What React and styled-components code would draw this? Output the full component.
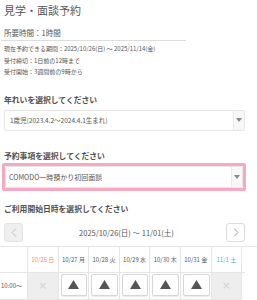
import React from "react";
import styled, { createGlobalStyle } from "styled-components";

const Global = createGlobalStyle`
  html, body { margin: 0; padding: 0; background: #fff; }
  body { font-family: "Noto Sans CJK JP", "Noto Sans", sans-serif; color: #555; overflow: hidden; }
  * { box-sizing: border-box; }
`;

const Page = styled.div`
  width: 257px;
  padding: 0 12px 0 4px;
`;

const Title = styled.h1`
  margin: 3px 0 0;
  font-size: 11px;
  line-height: 14px;
  font-weight: 400;
  color: #555;
`;

const Duration = styled.div`
  margin-top: 11px;
  font-size: 7.5px;
  line-height: 10px;
  color: #555;
`;

const Rule = styled.div`
  margin: 2px 0 0 -3px;
  width: 185px;
  border-top: 1px solid #ddd;
`;

const InfoList = styled.div`
  margin-top: 2px;
`;

const InfoLine = styled.div`
  font-size: 6px;
  line-height: 11.5px;
  color: #555;
  white-space: nowrap;
`;

const Heading = styled.div`
  margin-top: ${(p) => p.$mt}px;
  font-size: 7.8px;
  line-height: 12px;
  font-weight: 700;
  color: #505050;
  white-space: nowrap;
`;

const Ring = styled.div`
  margin: 1px -1px 0 -2px;
  border: 3px solid #f6a9c0;
  border-radius: 2px;
`;

const SelectBox = styled.div`
  margin-top: ${(p) => p.$mt}px;
  height: ${(p) => p.$h}px;
  display: flex;
  align-items: stretch;
  border: 1px solid #e6e6e6;
  border-radius: 2px;
  background: #fff;
`;

const SelectText = styled.div`
  flex: 1;
  display: flex;
  align-items: center;
  padding-left: ${(p) => p.$pl}px;
  font-size: ${(p) => p.$fs}px;
  color: #555;
  white-space: nowrap;
  overflow: hidden;
`;

const Arrow = styled.div`
  width: 11px;
  display: flex;
  align-items: center;
  justify-content: center;
  border-left: 1px solid #ececec;
  background: #f8f8f8;
`;

const Nav = styled.div`
  margin-top: 8px;
  height: 19px;
  display: flex;
  align-items: center;
  justify-content: space-between;
`;

const NavButton = styled.div`
  width: 19px;
  height: 19px;
  display: flex;
  align-items: center;
  justify-content: center;
  border: 1px solid ${(p) => (p.$disabled ? "#e4e4e4" : "#dcdcdc")};
  border-radius: 3px;
  background: ${(p) => (p.$disabled ? "#efefef" : "#fff")};
`;

const NavLabel = styled.div`
  font-size: 7.5px;
  color: #555;
  white-space: nowrap;
  padding-left: 4px;
`;

const TableWrap = styled.div`
  width: 257px;
`;

const Table = styled.div`
  margin-top: 4px;
  display: grid;
  grid-template-columns: 27px repeat(7, 30.6px) 4px;
  border-top: 1px solid #e6e6e6;
`;

const HeadCell = styled.div`
  height: 26px;
  display: flex;
  align-items: center;
  justify-content: center;
  border-left: ${(p) => (p.$first ? "none" : "1px solid #e6e6e6")};
  border-bottom: 1px solid #e6e6e6;
  font-size: 6px;
  white-space: nowrap;
  color: ${(p) => p.$color || "#555"};
`;

const TimeCell = styled.div`
  height: 27px;
  display: flex;
  align-items: center;
  padding-left: 1px;
  font-size: 6px;
  color: #555;
  white-space: nowrap;
  border-bottom: 1px solid #e6e6e6;
`;

const SlotCell = styled.div`
  height: 27px;
  padding: ${(p) => (p.$closed ? "0" : "1px 1px 3px 2px")};
  border-left: 1px solid #e6e6e6;
  border-bottom: 1px solid #e6e6e6;
  background: ${(p) => (p.$closed ? "#eeeeee" : "#fff")};
  display: flex;
  align-items: stretch;
  justify-content: center;
`;

const SlotButton = styled.div`
  flex: 1;
  display: flex;
  align-items: center;
  justify-content: center;
  border: 1px solid #d6d6d6;
  border-radius: 2px;
  background: #fff;
  box-shadow: 0 1px 1px rgba(0, 0, 0, 0.08);
`;

const Cross = styled.div`
  display: flex;
  align-items: center;
  justify-content: center;
  flex: 1;
  font-size: 11px;
  color: #d2d2d2;
  font-family: "DejaVu Sans", sans-serif;
`;

const Gutter = styled.div`
  border-left: 1px solid #e6e6e6;
  border-bottom: ${(p) => (p.$head ? "1px solid #e6e6e6" : "none")};
`;

const Caret = () => (
  <svg width="6" height="4" viewBox="0 0 6 4">
    <path d="M0 0 H6 L3 4 Z" fill="#8a8a8a" />
  </svg>
);

const Triangle = () => (
  <svg width="11" height="9" viewBox="0 0 11 9">
    <path d="M5.5 0 L11 9 H0 Z" fill="#555" />
  </svg>
);

const Chevron = ({ dir, color }) => (
  <svg width="6" height="9" viewBox="0 0 6 9">
    <path
      d={dir === "left" ? "M5 0.5 L1 4.5 L5 8.5" : "M1 0.5 L5 4.5 L1 8.5"}
      fill="none"
      stroke={color}
      strokeWidth="1"
    />
  </svg>
);

const days = [
  { label: "10/26 日", color: "#f08a6a", closed: true },
  { label: "10/27 月" },
  { label: "10/28 火" },
  { label: "10/29 水" },
  { label: "10/30 木" },
  { label: "10/31 金" },
  { label: "11/1 土", color: "#3fb0e2", closed: true },
];

export default function App() {
  return (
    <>
      <Global />
      <Page>
        <Title>見学・面談予約</Title>
        <Duration>所要時間：1時間</Duration>
        <Rule />
        <InfoList>
          <InfoLine>現在予約できる期間：2025/10/26(日) ～ 2025/11/14(金)</InfoLine>
          <InfoLine>受付締切：1日前の12時まで</InfoLine>
          <InfoLine>受付開始：3週間前の9時から</InfoLine>
        </InfoList>

        <Heading $mt={16}>年れいを選択してください</Heading>
        <SelectBox $mt={4} $h={21}>
          <SelectText $pl={5} $fs={6.5}>1歳児(2023.4.2～2024.4.1生まれ)</SelectText>
          <Arrow>
            <Caret />
          </Arrow>
        </SelectBox>

        <Heading $mt={19}>予約事項を選択してください</Heading>
        <Ring>
          <SelectBox $mt={0} $h={22}>
            <SelectText $pl={3} $fs={7}>COMODO一時預かり初回面談</SelectText>
            <Arrow>
              <Caret />
            </Arrow>
          </SelectBox>
        </Ring>

        <Heading $mt={12}>ご利用開始日時を選択してください</Heading>
        <Nav>
          <NavButton $disabled>
            <Chevron dir="left" color="#bdbdbd" />
          </NavButton>
          <NavLabel>2025/10/26(日) ～ 11/01(土)</NavLabel>
          <NavButton>
            <Chevron dir="right" color="#9a9a9a" />
          </NavButton>
        </Nav>
      </Page>
      <TableWrap>
        <Table>
          <HeadCell $first />
          {days.map((d) => (
            <HeadCell key={d.label} $color={d.color}>
              {d.label}
            </HeadCell>
          ))}
          <Gutter $head />
          <TimeCell>10:00～</TimeCell>
          {days.map((d) => (
            <SlotCell key={d.label} $closed={d.closed}>
              {d.closed ? (
                <Cross>×</Cross>
              ) : (
                <SlotButton>
                  <Triangle />
                </SlotButton>
              )}
            </SlotCell>
          ))}
          <Gutter />
        </Table>
      </TableWrap>
    </>
  );
}
